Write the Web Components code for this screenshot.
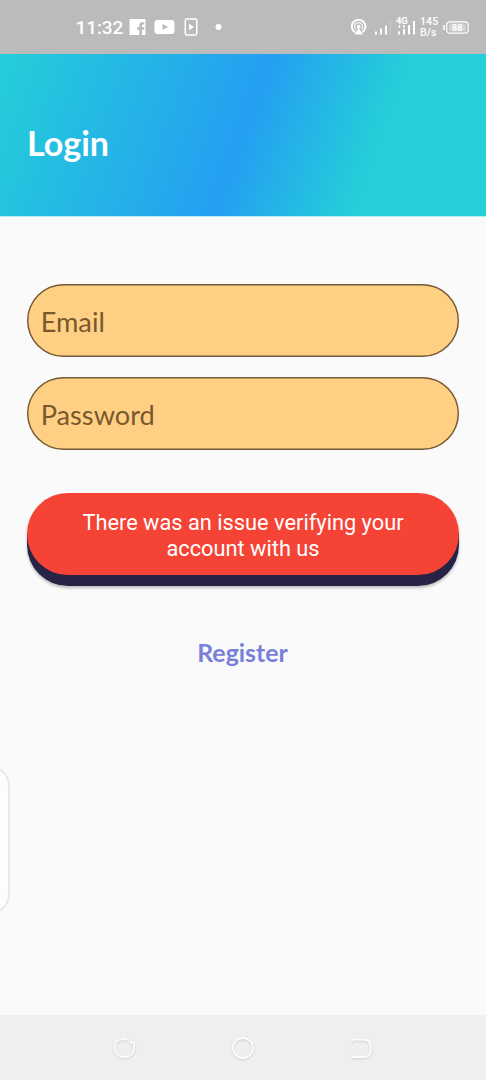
<!DOCTYPE html>
<html lang="en">
<head>
<meta charset="utf-8">
<title>Login</title>
<style>
html, body { margin: 0; height: 1080px; overflow: hidden; background: #fafafa; }
</style>
</head>
<body>
<login-screen></login-screen>
<script>
const define = (name, html) => customElements.define(name, class extends HTMLElement {
  constructor() {
    super();
    const t = document.createElement('template');
    t.innerHTML = html;
    this.attachShadow({ mode: 'open' }).append(t.content.cloneNode(true));
  }
});

define('status-bar', `
<style>
:host { display: flex; justify-content: space-between; height: 54px; background: #bbb; color: #fff; font-family: Roboto, sans-serif; }
.left { display: flex; align-items: center; padding-left: 75.500px; }
.time { font-size: 19px; font-weight: 500; line-height: 22px; letter-spacing: -.1px; width: 53px; padding-top: 2px; white-space: nowrap; }
svg { display: block; flex: none; }
.right { display: flex; align-items: center; padding-right: 17px; }
.net { position: relative; width: 20px; height: 24px; margin-left: 5px; }
.net b { position: absolute; left: 0; top: 1px; font-size: 9.500px; line-height: 9px; letter-spacing: -.3px; }
.rate { width: 20px; margin-left: 4px; font-size: 10.700px; line-height: 11px; font-weight: 500; white-space: nowrap; }
.bat { position: relative; margin-left: 3px; width: 26px; height: 13px; }
.bat b { position: absolute; left: 9px; top: 2px; font-size: 9px; line-height: 10px; }
</style>
<div class="left">
  <span class="time">11:32</span>
  <svg width="96" height="20" viewBox="0 0 96 20" fill="#fff">
    <path fill-rule="evenodd" d="M.5 2h16v16H13v-5.200h2.300v-2.600H13V8.700q0-1.200 1.200-1.200h1V5.200h-1.900q-3 0-3 3v2H8.100v2.600h2.200V18H.5z"/>
    <path fill-rule="evenodd" d="M28.500 3h14q3 0 3 3v8q0 3-3 3h-14q-3 0-3-3V6q0-3 3-3zm5 4v6l5.500-3z"/>
    <rect x="56.300" y="2" width="11.500" height="16" rx="1.500" fill="none" stroke="#fff" stroke-width="1.500"/>
    <path d="M60 6.800v6.400l5-3.200z"/>
    <circle cx="89.500" cy="10" r="3"/>
  </svg>
</div>
<div class="right">
  <svg width="40" height="20" viewBox="0 0 40 20" fill="none" stroke="#fff">
    <path d="M4.200 15.400a6.800 6.800 0 1 1 6.800 0" stroke-width="2"/>
    <path d="M5 12.600a4 4 0 1 1 5.200 0" stroke-width="1.300" opacity=".8"/>
    <path d="M7.600 11l4 6.500h-8z" fill="#fff" stroke="none"/>
    <circle cx="7.600" cy="9.800" r="2" fill="#fff" stroke="none"/>
    <path d="M25 17.500v-3M30 17.500v-6M35 17.500V8.500" stroke-width="2"/>
    <path d="M40 17.500v-14" stroke-width="1.500" opacity=".35"/>
  </svg>
  <div class="net"><b>4G</b>
    <svg width="20" height="24" viewBox="0 0 20 24" stroke="#fff" stroke-width="2"><path d="M3.500 10v3M8 10v3" stroke-width="1.500"/><path d="M3 19.500v-3M8 19.500v-5.500M13 19.500V10M18 19.500V6"/></svg>
  </div>
  <div class="rate">145<br>B/s</div>
  <div class="bat">
    <svg width="26" height="13" viewBox="0 0 26 13" fill="none" stroke="#fff"><path d="M1 4v5" stroke-width="1.500"/><rect x="3.700" y=".8" width="21.500" height="11.400" rx="3.500" stroke-width="1.200"/><rect x="6" y="2.500" width="17" height="8" rx="2" fill="#fff" fill-opacity=".35" stroke="none"/></svg>
    <b>88</b>
  </div>
</div>`);

define('page-header', `
<style>
:host { display: flex; align-items: center; box-sizing: border-box; height: 162px; padding: 16px 27px 0; color: #fff; box-shadow: 0 1px 0 #b9edf2;
  background: linear-gradient(110.300deg, #25ced9 0%, #249ff2 50%, #25ced9 75%); }
h1 { margin: 0; font: 700 34px/42px Lato, sans-serif; }
</style>
<h1><slot></slot></h1>`);

define('text-field', `
<style>
:host { display: flex; align-items: center; box-sizing: border-box; height: 73px; padding: 3px 13.700px 0; box-shadow: inset 0 0 0 1.400px #73583a; border-radius: 37px;
  background: #ffd083; color: #79582e; font: 400 27.200px/34px Lato, sans-serif; }
</style>
<slot></slot>`);

define('error-button', `
<style>
:host { display: block; height: 93px; border-radius: 41px; background: linear-gradient(transparent 42%, #262344 42%); box-shadow: 0 2px 3px rgba(0,0,0,.25); }
div { display: flex; align-items: center; justify-content: center; box-sizing: border-box; height: 82px; padding: 4px 40px 0; border-radius: 41px; background: #f54336;
  color: #fff; font: 400 21.800px/26px Roboto, sans-serif; text-align: center; }
</style>
<div><span><slot></slot></span></div>`);

define('text-link', `
<style>
:host { display: block; margin-right: 1px; text-align: center; color: #7880da; font: 700 24.900px/30px Lato, sans-serif; }
</style>
<slot></slot>`);

define('edge-handle', `
<style>
:host { display: block; overflow: hidden; width: 11px; height: 148px; }
div { box-sizing: border-box; width: 40px; height: 148px; margin-left: -30px; border: 2px solid #e8e8e8; border-radius: 20px; background: #fdfdfd; }
</style><div></div>`);

define('nav-bar', `
<style>
:host { display: flex; align-items: center; justify-content: center; gap: 95px; height: 65px; background: #efefef; }
svg { display: block; filter: drop-shadow(0 1px 1px rgba(0,0,0,.14)); }
</style>
<svg width="24" height="24" viewBox="0 0 24 24" fill="none" stroke="#fcfcfc" stroke-width="1.800"><path d="M15 3.200H11Q3 3.200 2.800 11.500 3 21 12.500 21 21.500 21 22 12V6.500h-4"/></svg>
<svg width="24" height="24" viewBox="0 0 24 24" fill="none" stroke="#fcfcfc" stroke-width="1.800"><circle cx="12" cy="12" r="10"/></svg>
<svg width="24" height="24" viewBox="0 0 24 24" fill="none" stroke="#fcfcfc" stroke-width="1.800"><path d="M2 3.500h11q7.500 0 7.500 7v4q0 6.500-7 6.500H2M2 2v4"/></svg>`);

define('login-screen', `
<style>
:host { display: flex; flex-direction: column; position: relative; width: 486px; height: 1080px; background: #fafafa; }
main { flex: 1; display: flex; flex-direction: column; padding: 68px 27px 0; }
text-field + text-field { margin-top: 20px; }
error-button { margin-top: 43px; }
text-link { margin-top: 51px; }
edge-handle { position: absolute; left: 0; top: 766px; }
</style>
<status-bar></status-bar>
<page-header>Login</page-header>
<main>
  <text-field>Email</text-field>
  <text-field>Password</text-field>
  <error-button>There was an issue verifying your<br>account with us</error-button>
  <text-link>Register</text-link>
</main>
<nav-bar></nav-bar>
<edge-handle></edge-handle>`);
</script>
</body>
</html>
